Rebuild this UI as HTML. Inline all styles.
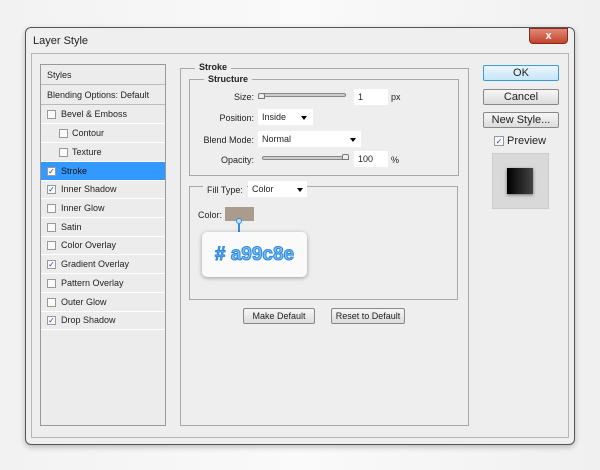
<!DOCTYPE html>
<html><head><style>
*{margin:0;padding:0;box-sizing:border-box}
body{width:600px;height:470px;background:linear-gradient(90deg,#f2f2f2,#fafafa 50%,#f0f0f0);font-family:"Liberation Sans",sans-serif;font-size:9px;color:#222;position:relative;overflow:hidden}
.a{position:absolute}
.dlg{left:25px;top:27px;width:550px;height:418px;background:#efefef;border:1px solid #555;border-radius:6px;box-shadow:0 2px 6px rgba(0,0,0,.25)}
.in{left:31px;top:53px;width:538px;height:385px;border:1px solid #b5b5b5;background:#eeeeee}
.list{left:40px;top:64px;width:126px;height:362px;border:1px solid #999;background:#ececec}
.row{position:absolute;left:0;width:124px;height:19px;border-bottom:1px solid #fff;line-height:18px}
.cb{position:absolute;width:9px;height:9px;border:1px solid #999;background:#fafafa;top:5px;font-size:8px;line-height:7px;color:#2a3f9a;text-align:center}
.grp{border:1px solid #a8a8a8}
.lab{position:absolute;background:#eeeeee;padding:0 4px;font-weight:bold}
.btn{position:absolute;border:1px solid #888;border-radius:2px;background:linear-gradient(#f6f6f6,#dcdcdc);text-align:center;font-size:10px;line-height:14px}
.inp{position:absolute;background:#fff;height:16px;line-height:16px;padding-left:4px}
.sl{position:absolute;height:4px;border:1px solid #888;background:#ccc;border-radius:2px}
.tri{position:absolute;width:0;height:0;border-left:3px solid transparent;border-right:3px solid transparent;border-top:4px solid #000}
.r{position:absolute;text-align:right}
</style></head><body>
<div class="a dlg"></div>
<div class="a" style="left:33px;top:35px;font-size:11px">Layer Style</div>
<div class="a" style="left:529px;top:28px;width:39px;height:16px;background:linear-gradient(#e08a78,#c4432b);border:1px solid #8a2a1a;border-radius:0 0 4px 4px;color:#fff;text-align:center;font-size:11px;font-weight:bold;line-height:14px">x</div>
<div class="a in"></div>
<div class="a list">
<div class="row" style="top:0;height:20px;border-bottom:1px solid #bbb;padding-left:6px;line-height:20px">Styles</div>
<div class="row" style="top:20px;height:20px;border-bottom:1px solid #bbb;padding-left:6px;line-height:20px">Blending Options: Default</div>
<div class="row" style="top:40px"><span class="cb" style="left:6px"></span><span style="position:absolute;left:20px">Bevel &amp; Emboss</span></div>
<div class="row" style="top:59px"><span class="cb" style="left:18px"></span><span style="position:absolute;left:31px">Contour</span></div>
<div class="row" style="top:78px"><span class="cb" style="left:18px"></span><span style="position:absolute;left:31px">Texture</span></div>
<div class="row" style="top:97px;background:#3399ff;color:#111"><span class="cb" style="left:6px">✓</span><span style="position:absolute;left:20px">Stroke</span></div>
<div class="row" style="top:115px"><span class="cb" style="left:6px">✓</span><span style="position:absolute;left:20px">Inner Shadow</span></div>
<div class="row" style="top:134px"><span class="cb" style="left:6px"></span><span style="position:absolute;left:20px">Inner Glow</span></div>
<div class="row" style="top:153px"><span class="cb" style="left:6px"></span><span style="position:absolute;left:20px">Satin</span></div>
<div class="row" style="top:171px"><span class="cb" style="left:6px"></span><span style="position:absolute;left:20px">Color Overlay</span></div>
<div class="row" style="top:190px"><span class="cb" style="left:6px">✓</span><span style="position:absolute;left:20px">Gradient Overlay</span></div>
<div class="row" style="top:209px"><span class="cb" style="left:6px"></span><span style="position:absolute;left:20px">Pattern Overlay</span></div>
<div class="row" style="top:228px"><span class="cb" style="left:6px"></span><span style="position:absolute;left:20px">Outer Glow</span></div>
<div class="row" style="top:246px"><span class="cb" style="left:6px">✓</span><span style="position:absolute;left:20px">Drop Shadow</span></div>
</div>
<div class="a grp" style="left:180px;top:68px;width:289px;height:358px"></div>
<div class="lab" style="left:195px;top:62px">Stroke</div>
<div class="a grp" style="left:189px;top:79px;width:270px;height:97px"></div>
<div class="lab" style="left:204px;top:74px">Structure</div>
<div class="r" style="left:200px;top:92px;width:54px">Size:</div>
<div class="sl" style="left:262px;top:93px;width:84px"></div>
<div class="a" style="left:258px;top:93px;width:7px;height:6px;border:1px solid #777;background:#eee;border-radius:2px 2px 0 0"></div>
<div class="inp" style="left:354px;top:89px;width:34px">1</div>
<div class="a" style="left:391px;top:92px">px</div>
<div class="r" style="left:200px;top:113px;width:54px">Position:</div>
<div class="inp" style="left:258px;top:109px;width:55px">Inside</div><div class="tri" style="left:301px;top:116px"></div>
<div class="r" style="left:190px;top:135px;width:64px">Blend Mode:</div>
<div class="inp" style="left:258px;top:131px;width:103px">Normal</div><div class="tri" style="left:350px;top:138px"></div>
<div class="r" style="left:200px;top:155px;width:54px">Opacity:</div>
<div class="sl" style="left:262px;top:156px;width:84px"></div>
<div class="a" style="left:342px;top:154px;width:7px;height:6px;border:1px solid #777;background:#eee;border-radius:2px 2px 0 0"></div>
<div class="inp" style="left:354px;top:151px;width:34px">100</div>
<div class="a" style="left:391px;top:155px">%</div>
<div class="a grp" style="left:189px;top:186px;width:269px;height:114px"></div>
<div class="lab" style="left:203px;top:185px;font-weight:normal">Fill Type:</div>
<div class="inp" style="left:248px;top:181px;width:59px">Color</div><div class="tri" style="left:297px;top:188px"></div>
<div class="a" style="left:198px;top:210px">Color:</div>
<div class="a" style="left:225px;top:207px;width:29px;height:14px;background:#a99c8e"></div>
<div class="a" style="left:236px;top:218px;width:6px;height:6px;border:1.5px solid #2e8fe6;border-radius:50%;background:#bfe0ff"></div>
<div class="a" style="left:238px;top:224px;width:2px;height:8px;background:#2e8fe6"></div>
<div class="a" style="left:202px;top:232px;width:105px;height:45px;background:#fafafa;border-radius:5px;box-shadow:0 1px 4px rgba(0,0,0,.35);text-align:center;line-height:45px;font-size:19px;font-weight:bold;color:#7ec0f4;-webkit-text-stroke:1px #2a86dc">#&nbsp;a99c8e</div>
<div class="btn" style="left:243px;top:308px;width:72px;height:16px;font-size:9px">Make Default</div>
<div class="btn" style="left:331px;top:308px;width:74px;height:16px;font-size:9px">Reset to Default</div>
<div class="btn" style="left:483px;top:65px;width:76px;height:16px;border-color:#3c9ad6;background:linear-gradient(#eaf6fd,#c6e6f9);font-size:11px">OK</div>
<div class="btn" style="left:483px;top:89px;width:76px;height:16px;font-size:11px">Cancel</div>
<div class="btn" style="left:483px;top:112px;width:76px;height:16px;font-size:11px">New Style...</div>
<div class="cb" style="left:494px;top:136px;width:10px;height:10px;line-height:9px">✓</div>
<div class="a" style="left:507px;top:135px;font-size:11px">Preview</div>
<div class="a" style="left:492px;top:153px;width:57px;height:56px;background:#d9d9d9;border:1px solid #ccc"></div>
<div class="a" style="left:507px;top:168px;width:26px;height:26px;background:linear-gradient(90deg,#000,#444);box-shadow:0 1px 3px rgba(0,0,0,.5)"></div>
</body></html>
